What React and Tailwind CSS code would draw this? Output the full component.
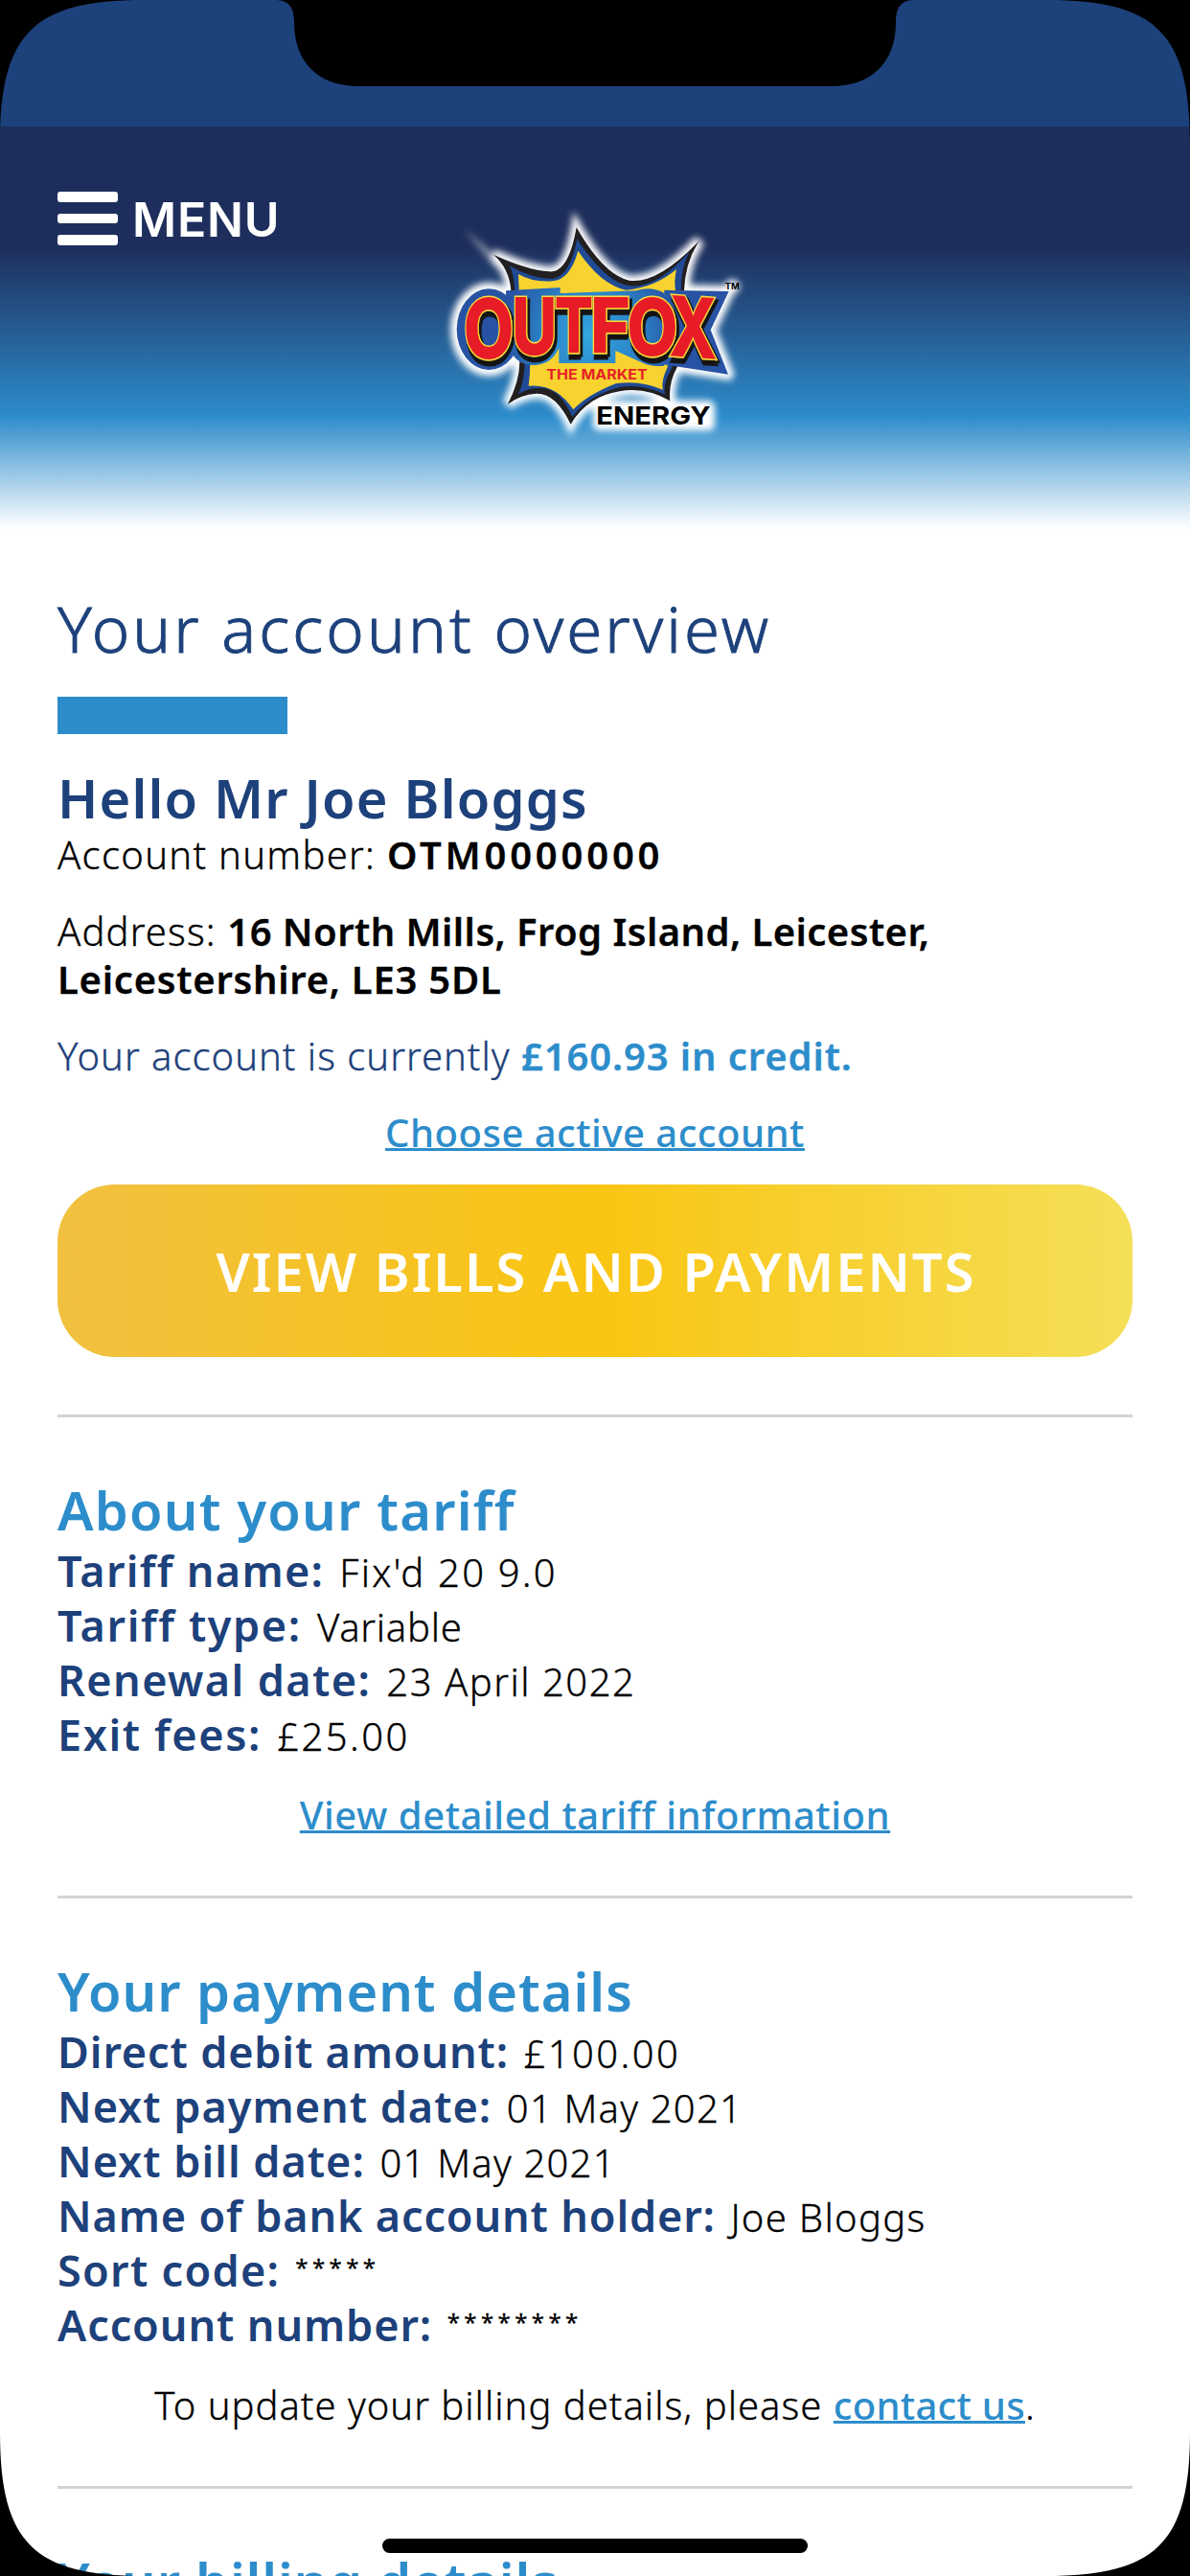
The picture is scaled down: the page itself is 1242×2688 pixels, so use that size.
const STAR =
  "M225 197Q330 245 400 250Q460 255 485 112Q570 260 650 278Q740 290 870 153Q825 220 822 310L800 550Q772 600 778 655Q700 610 620 625Q520 640 467 728Q420 630 360 632Q310 635 270 665Q308 590 307 530L280 310Q275 240 225 197Z";
const X_PLATE = "M760 308L962 312L905 433L960 572L850 555L750 540Z";

const letters = [
  { char: "O", x: 131, y: 523, size: 258, width: 158 },
  { char: "U", x: 283, y: 509, size: 248, width: 141 },
  { char: "T", x: 416, y: 505, size: 240, width: 121 },
  { char: "F", x: 528, y: 505, size: 240, width: 126 },
  { char: "O", x: 643, y: 512, size: 246, width: 160 },
];

const Logo = () => (
  <svg
    className="h-[270px] w-[360px] font-['Inter',sans-serif] font-extrabold"
    viewBox="0 0 1080 810"
    role="img"
    aria-label="Outfox the Market Energy"
  >
    <defs>
      <radialGradient id="plate" gradientUnits="userSpaceOnUse" cx="530" cy="450" r="330">
        <stop offset="0" stopColor="#35a8e0" />
        <stop offset="0.45" stopColor="#2b83c6" />
        <stop offset="0.85" stopColor="#2852a3" />
      </radialGradient>
      <filter id="glow" x="-20%" y="-20%" width="140%" height="140%">
        <feGaussianBlur stdDeviation="11" />
      </filter>
      <filter id="extrude" x="-10%" y="-10%" width="120%" height="130%">
        <feFlood floodColor="#171717" result="ink" />
        <feComposite in="ink" in2="SourceAlpha" operator="in" result="solid" />
        <feOffset in="solid" dx="9" dy="10" result="near" />
        <feOffset in="solid" dx="2" dy="18" result="far" />
        <feMerge>
          <feMergeNode in="far" />
          <feMergeNode in="near" />
          <feMergeNode in="SourceGraphic" />
        </feMerge>
      </filter>
    </defs>
    <g fill="#fff" stroke="#fff" filter="url(#glow)">
      <path d={STAR} strokeWidth="34" strokeMiterlimit="4" />
      <path d="M140 125L250 215L235 240Z" strokeWidth="2" opacity="0.5" />
      <path d={X_PLATE} strokeWidth="36" strokeLinejoin="round" />
      <ellipse cx="211" cy="431" rx="120" ry="146" />
      <rect x="556" y="674" width="342" height="54" strokeWidth="40" strokeLinejoin="round" />
      <circle cx="973" cy="297" r="22" />
    </g>
    <path d={STAR} fill="#211f20" />
    <path
      d="M275 232Q350 275 410 272Q465 265 487 148Q580 290 655 295Q740 300 838 188Q812 240 812 310L785 550Q755 600 762 635Q690 600 620 612Q520 640 472 705Q430 610 370 615Q335 612 303 635Q325 580 322 530L292 310Q290 260 275 232Z"
      fill="#204a94"
    />
    <path
      d="M303 258Q350 285 410 280Q465 275 490 185Q560 290 640 308Q730 300 798 243Q790 280 795 310L770 550Q750 590 755 620Q690 590 610 600Q520 635 475 682Q420 600 335 608Q340 570 340 530L305 310Z"
      fill="#f8d330"
    />
    <g fill="url(#plate)">
      <ellipse cx="211" cy="431" rx="101" ry="127" />
      <path d="M264 310L434 300V318L672 310Q720 295 760 318V545Q720 550 690 535L607 498V537H430V490Q405 545 345 543Q290 540 270 480Z" />
      <path d={X_PLATE} />
    </g>
    <g
      fill="#e71f26"
      stroke="#f9dc3c"
      strokeWidth="9"
      paintOrder="stroke"
      filter="url(#extrude)"
    >
      {letters.map((l) => (
        <text
          key={l.x}
          x={l.x}
          y={l.y}
          fontSize={l.size}
          textLength={l.width}
          lengthAdjust="spacingAndGlyphs"
        >
          {l.char}
        </text>
      ))}
      <text
        transform="translate(774 514) skewY(4)"
        fontSize="262"
        textLength="152"
        lengthAdjust="spacingAndGlyphs"
      >
        X
      </text>
    </g>
    <g className="font-bold">
      <text
        x="391"
        y="588"
        fontSize="43"
        fill="#e71f26"
        textLength="316"
        lengthAdjust="spacingAndGlyphs"
      >
        THE MARKET
      </text>
      <text x="547" y="728" fontSize="77" textLength="358" lengthAdjust="spacingAndGlyphs">
        ENERGY
      </text>
      <text x="950" y="306" fontSize="26" textLength="45" lengthAdjust="spacingAndGlyphs">
        TM
      </text>
    </g>
  </svg>
);

const MenuButton = () => (
  <button className="flex h-14 w-[380px] items-start" type="button">
    <span className="flex w-[63px] flex-col gap-3">
      <span className="h-[10.5px] rounded-[3px] bg-white" />
      <span className="h-[10.5px] rounded-[3px] bg-white" />
      <span className="h-[10.5px] rounded-[3px] bg-white" />
    </span>
    <span className="ml-[15px] font-['Inter',sans-serif] text-[50px] leading-[58px] font-semibold tracking-[0.8px] text-white">
      MENU
    </span>
  </button>
);

const Divider = ({ className }) => <hr className={`h-[3px] border-0 bg-[#d3d3d3] ${className}`} />;

const SectionTitle = ({ children, className }) => (
  <h2
    className={`mt-[66px] text-[56px] leading-[60px] font-semibold whitespace-nowrap text-[#2d8dcb] ${className}`}
  >
    {children}
  </h2>
);

const Row = ({ label, value, labelClass = "tracking-[1px]", valueClass = "tracking-[1.5px]" }) => (
  <div className="h-[57px] text-[45px] leading-[57px] whitespace-nowrap">
    <dt className={`inline font-semibold text-[#1d417b] ${labelClass}`}>{label}: </dt>
    <dd
      className={`ml-[3px] inline text-[40px] leading-none font-light [-webkit-text-stroke:0.3px] ${valueClass}`}
    >
      {value}
    </dd>
  </div>
);

const Masked = ({ children }) => (
  <span className="align-[11px] text-[24px] leading-none font-normal tracking-[4.4px]">
    {children}
  </span>
);

const Link = ({ children, className }) => (
  <a
    className={`font-medium text-[#2d8dcb] underline decoration-[3px] underline-offset-[1px] [-webkit-text-stroke:0px] [text-decoration-skip-ink:none] ${className}`}
    href="#"
  >
    {children}
  </a>
);

const DeviceFrame = () => (
  <svg className="pointer-events-none absolute inset-0 h-full w-full" viewBox="0 0 1242 2688">
    <path d="M0 0H150C35 0 0 35 0 150Z" />
    <path d="M1242 0H1092C1207 0 1242 35 1242 150Z" />
    <path d="M0 2688H150C35 2688 0 2653 0 2538Z" />
    <path d="M1242 2688H1092C1207 2688 1242 2653 1242 2538Z" />
    <path d="M289 0C301 1 307 7 307 23C307 65 332 90 375 90H867C910 90 935 65 935 23C935 7 941 1 953 0Z" />
    <rect x="399" y="2649" width="444" height="15" rx="7.5" />
  </svg>
);

const App = () => (
  <div className="relative h-[2688px] w-[1242px] overflow-hidden bg-white font-['Noto_Sans',sans-serif] text-black">
    <div className="h-[132px] bg-[#1d417b]" />
    <header className="flex h-[420px] items-start bg-[linear-gradient(#1e2e5c_30%,#2d8ccb_72%,#fff_100%)] pt-[68px] pl-[60px]">
      <MenuButton />
      <Logo />
    </header>

    <main className="px-[60px] pt-[63px] text-[40px] leading-[50px]">
      <h1 className="text-[67px] leading-[80px] font-light tracking-[3.1px] text-[#1d417b] [-webkit-text-stroke:0.9px]">
        Your account overview
      </h1>
      <div className="mt-8 h-[39px] w-60 bg-[#2d8dcb]" />
      <h2 className="mt-9 text-[56px] leading-[60px] font-semibold tracking-[1.2px] text-[#1d417b]">
        Hello Mr Joe Bloggs
      </h2>
      <div className="font-light [-webkit-text-stroke:0.3px]">
        <p className="mt-[5px] tracking-[1.3px]">
          Account number: <b className="font-semibold tracking-[3.8px]">OTM0000000</b>
        </p>
        <p className="mt-[30px] tracking-[1.15px]">
          Address:{" "}
          <b className="font-semibold tracking-[0.45px]">
            16 North Mills, Frog Island, Leicester,
          </b>
          <br />
          <b className="font-semibold tracking-[0.75px]">Leicestershire, LE3 5DL</b>
        </p>
        <p className="mt-[30px] tracking-[1px] text-[#1d417b]">
          Your account is currently{" "}
          <b className="font-semibold tracking-[0.9px] text-[#2d8dcb]">£160.93 in credit.</b>
        </p>
      </div>
      <p className="mt-[30px] text-center">
        <Link className="tracking-[0.5px]">Choose active account</Link>
      </p>
      <button
        className="mt-[29px] flex h-[180px] w-full items-center justify-center rounded-[60px] bg-[linear-gradient(90deg,#f1c040,#fac512_50%,#f5df58)] pl-0.5 text-[56px] font-semibold tracking-[2px] text-white"
        type="button"
      >
        VIEW BILLS AND PAYMENTS
      </button>
      <Divider className="mt-[60px]" />

      <section>
        <SectionTitle className="tracking-[1.2px]">About your tariff</SectionTitle>
        <dl className="mt-[5px]">
          <Row
            label="Tariff name"
            value="Fix'd 20 9.0"
            labelClass="tracking-[1.3px]"
            valueClass="tracking-[2.2px]"
          />
          <Row
            label="Tariff type"
            value="Variable"
            labelClass="tracking-[1.6px]"
            valueClass="tracking-[0.7px]"
          />
          <Row label="Renewal date" value="23 April 2022" labelClass="tracking-[1.4px]" />
          <Row
            label="Exit fees"
            value="£25.00"
            labelClass="tracking-[1.6px]"
            valueClass="tracking-[2.4px]"
          />
        </dl>
        <p className="mt-[31px] text-center">
          <Link className="tracking-[0.55px]">View detailed tariff information</Link>
        </p>
        <Divider className="mt-[59px]" />
      </section>

      <section>
        <SectionTitle className="tracking-[1px]">Your payment details</SectionTitle>
        <dl className="mt-[5px]">
          <Row
            label="Direct debit amount"
            value="£100.00"
            labelClass="tracking-[0.85px]"
            valueClass="tracking-[2.4px]"
          />
          <Row label="Next payment date" value="01 May 2021" valueClass="tracking-[1.2px]" />
          <Row label="Next bill date" value="01 May 2021" valueClass="tracking-[1.2px]" />
          <Row
            label="Name of bank account holder"
            value="Joe Bloggs"
            labelClass="tracking-[0.85px]"
            valueClass="tracking-[1.3px]"
          />
          <Row label="Sort code" value={<Masked>*****</Masked>} labelClass="tracking-[1.3px]" />
          <Row
            label="Account number"
            value={<Masked>********</Masked>}
            labelClass="tracking-[0.9px]"
          />
        </dl>
        <p className="mt-[31px] text-center font-light tracking-[1px] whitespace-nowrap [-webkit-text-stroke:0.3px]">
          To update your billing details, please{" "}
          <Link className="tracking-[0.3px]">contact us</Link>.
        </p>
        <Divider className="mt-[59px]" />
      </section>

      <SectionTitle className="tracking-[0.8px]">Your billing details</SectionTitle>
    </main>

    <DeviceFrame />
  </div>
);

export default App;
